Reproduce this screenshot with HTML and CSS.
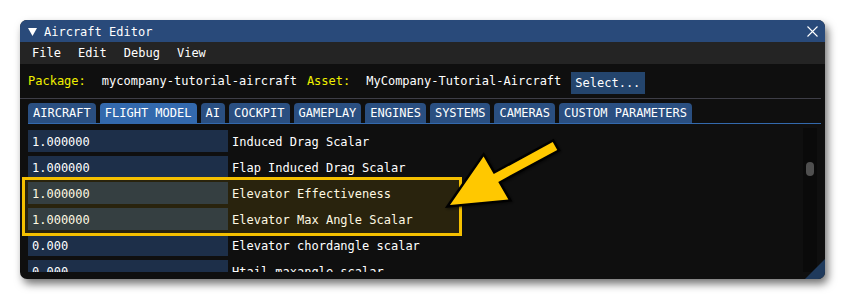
FILE: index.html
```html
<!DOCTYPE html>
<html>
<head>
<meta charset="utf-8">
<link rel="stylesheet" href="styles.css">
</head>
<body>
<div class="window">
  <div class="titlebar">
    <svg class="collapse" width="9" height="8" viewBox="0 0 9 8"><polygon points="0,0 9,0 4.5,8" fill="#ffffff"/></svg>
    <span class="title">Aircraft Editor</span>
    <svg class="close" width="11" height="11" viewBox="0 0 11 11"><path d="M0.5 0.5 L10.5 10.5 M10.5 0.5 L0.5 10.5" stroke="#ffffff" stroke-width="1.1"/></svg>
  </div>
  <div class="menubar">
    <span class="menu">File</span><span class="menu">Edit</span><span class="menu">Debug</span><span class="menu">View</span>
  </div>
  <div class="pkgrow">
    <span class="key">Package:</span><span class="val">mycompany-tutorial-aircraft</span>
    <span class="key asset">Asset:</span><span class="val">MyCompany-Tutorial-Aircraft</span>
    <span class="btn">Select...</span>
  </div>
  <div class="sep"></div>
  <div class="tabs">
    <span class="tab">AIRCRAFT</span>
    <span class="tab active">FLIGHT MODEL</span>
    <span class="tab">AI</span>
    <span class="tab">COCKPIT</span>
    <span class="tab">GAMEPLAY</span>
    <span class="tab">ENGINES</span>
    <span class="tab">SYSTEMS</span>
    <span class="tab">CAMERAS</span>
    <span class="tab">CUSTOM PARAMETERS</span>
  </div>
  <div class="tabline"></div>
  <div class="content">
    <div class="rows">
      <div class="row"><span class="input">1.000000</span><span class="label">Induced Drag Scalar</span></div>
      <div class="row"><span class="input">1.000000</span><span class="label">Flap Induced Drag Scalar</span></div>
      <div class="row"><span class="input">1.000000</span><span class="label">Elevator Effectiveness</span></div>
      <div class="row"><span class="input">1.000000</span><span class="label">Elevator Max Angle Scalar</span></div>
      <div class="row"><span class="input">0.000</span><span class="label">Elevator chordangle scalar</span></div>
      <div class="row"><span class="input">0.000</span><span class="label">Htail maxangle scalar</span></div>
    </div>
    <div class="scrollbar"><div class="thumb"></div></div>
  </div>
  <div class="highlight"></div>
  <svg class="grip" width="20" height="20" viewBox="0 0 20 20"><polygon points="20,0 20,20 0,20" fill="#1f3a5c"/></svg>
</div>
<svg class="arrow" width="845" height="300" viewBox="0 0 845 300">
  <defs>
    <filter id="sh" x="-20%" y="-20%" width="140%" height="140%">
      <feGaussianBlur in="SourceAlpha" stdDeviation="1.5"/>
      <feOffset dx="1" dy="1" result="b"/>
      <feFlood flood-color="#000" flood-opacity="0.6"/>
      <feComposite in2="b" operator="in"/>
      <feMerge><feMergeNode/><feMergeNode in="SourceGraphic"/></feMerge>
    </filter>
  </defs>
  <polygon filter="url(#sh)" points="450,205 483.6,156.6 493.75,174.1 552.75,142.1 557.25,149.9 498.25,181.9 508.4,199.4" fill="#ffc800" stroke="#000000" stroke-width="5" stroke-linejoin="miter" paint-order="stroke"/>
</svg>
</body>
</html>
```
FILE: styles.css
```css
html, body {
  margin: 0;
  padding: 0;
  background: #ffffff;
  width: 845px;
  height: 300px;
  overflow: hidden;
}
body {
  position: relative;
  font-family: "DejaVu Sans Mono", "Liberation Mono", monospace;
  font-size: 12px;
  color: #ffffff;
}
.window {
  position: relative;
  margin: 20px 0 0 20px;
  width: 805px;
  height: 259px;
  border-radius: 7px;
  overflow: hidden;
  background: #0f0f0f;
  box-shadow: 3px 5px 8px rgba(0, 0, 0, 0.55);
  display: flex;
  flex-direction: column;
}
.titlebar {
  height: 22px;
  flex: none;
  background: #294a7a;
  display: flex;
  align-items: center;
  padding: 0 7px 0 8px;
}
.collapse {
  display: block;
  margin-top: 1px;
}
.title {
  margin-left: 7px;
  line-height: 22px;
  padding-top: 1px;
}
.close {
  display: block;
  margin-left: auto;
}
.menubar {
  height: 22px;
  flex: none;
  background: #242424;
  display: flex;
  padding-left: 12px;
  gap: 17px;
  line-height: 22px;
}
.pkgrow {
  height: 34px;
  flex: none;
  display: flex;
  align-items: flex-start;
  padding-left: 8px;
}
.key {
  color: #f0f000;
  line-height: 22px;
  margin-top: 6px;
}
.val {
  line-height: 22px;
  margin-top: 6px;
  margin-left: 16px;
}
.asset {
  margin-left: 10px;
}
.btn {
  margin-left: 10px;
  margin-top: 8px;
  height: 22px;
  line-height: 23px;
  padding: 0 5px 0 4px;
  background: #24456d;
}
.sep {
  height: 1px;
  flex: none;
  background: #3e3e47;
  margin-right: 4px;
}
.tabs {
  flex: none;
  display: flex;
  gap: 4px;
  margin-top: 4px;
  padding-left: 8px;
  height: 20px;
}
.tab {
  height: 20px;
  line-height: 21px;
  padding: 0 5px;
  background: #2a4f81;
  border-radius: 4px 4px 0 0;
}
.tab.active {
  background: #3369ad;
}
.tabline {
  height: 1px;
  flex: none;
  background: #3369ad;
  margin: 0 4px 0 8px;
}
.content {
  flex: none;
  display: flex;
  padding: 4px 8px 0 8px;
}
.rows {
  flex: 1;
  height: 144px;
  overflow: hidden;
  padding-top: 2px;
  box-sizing: border-box;
  display: flex;
  flex-direction: column;
  gap: 4px;
}
.row {
  display: flex;
  flex: none;
  height: 22px;
}
.input {
  width: 200px;
  height: 22px;
  line-height: 24px;
  padding-left: 4px;
  box-sizing: border-box;
  background: #1d2f49;
}
.label {
  margin-left: 4px;
  line-height: 24px;
}
.scrollbar {
  width: 14px;
  height: 144px;
  background: #0a0a0a;
  padding-top: 34px;
  box-sizing: border-box;
}
.thumb {
  width: 8px;
  height: 14px;
  margin-left: 3px;
  border-radius: 4px;
  background: #4f4f4f;
}
.highlight {
  position: absolute;
  left: 2px;
  top: 157px;
  width: 440px;
  height: 59px;
  box-sizing: border-box;
  border: 3px solid #f5c000;
  background: rgba(255, 200, 0, 0.11);
}
.grip {
  position: absolute;
  right: 0;
  bottom: 0;
  display: block;
}
.arrow {
  position: absolute;
  left: 0;
  top: 0;
  pointer-events: none;
}
```
